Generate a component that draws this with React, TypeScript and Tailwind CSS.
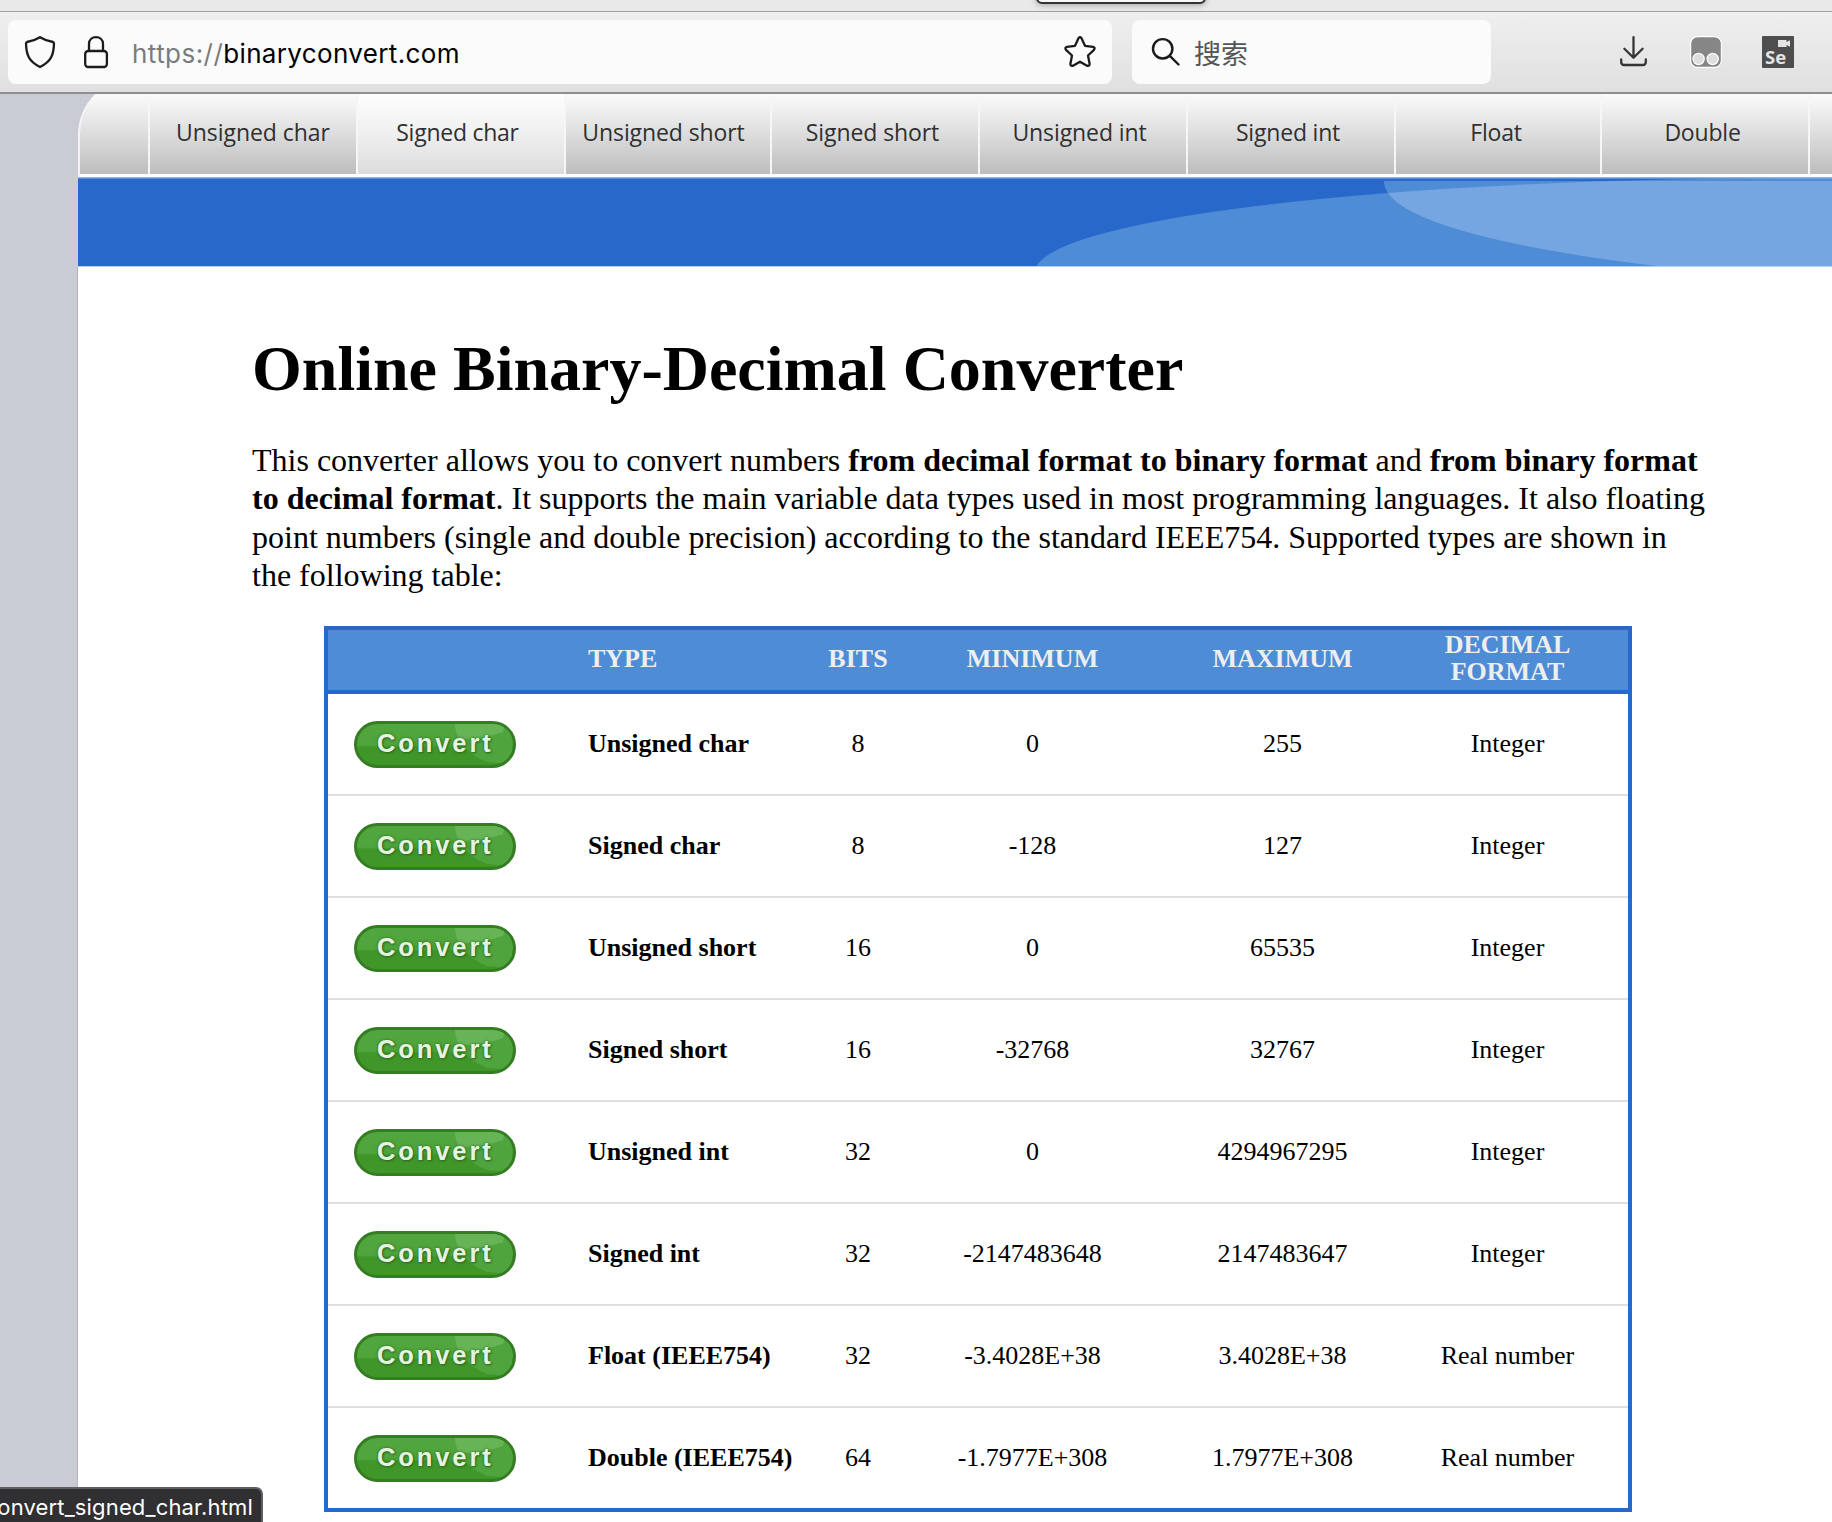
import React from "react";

const tabs = [
  { label: "Unsigned char", cls: "w-[208px]", text: "tracking-[-0.050px]", active: false },
  { label: "Signed char", cls: "w-[208px] pr-[7px]", text: "tracking-[-0.250px]", active: true },
  { label: "Unsigned short", cls: "w-[206px] pr-[9px]", text: "tracking-[-0.100px]", active: false },
  { label: "Signed short", cls: "w-[208px] pr-[5px]", text: "tracking-[-0.100px]", active: false },
  { label: "Unsigned int", cls: "w-[208px] pr-[7px]", text: "tracking-[-0.100px]", active: false },
  { label: "Signed int", cls: "w-[208px] pr-[6px]", text: "tracking-[-0.200px]", active: false },
  { label: "Float", cls: "w-[206px] pr-[4px]", text: "tracking-[-0.200px]", active: false },
  { label: "Double", cls: "w-[208px] pr-[5px]", text: "tracking-[-0.200px]", active: false },
];

const rows = [
  ["Unsigned char", "8", "0", "255", "Integer"],
  ["Signed char", "8", "-128", "127", "Integer"],
  ["Unsigned short", "16", "0", "65535", "Integer"],
  ["Signed short", "16", "-32768", "32767", "Integer"],
  ["Unsigned int", "32", "0", "4294967295", "Integer"],
  ["Signed int", "32", "-2147483648", "2147483647", "Integer"],
  ["Float (IEEE754)", "32", "-3.4028E+38", "3.4028E+38", "Real number"],
  ["Double (IEEE754)", "64", "-1.7977E+308", "1.7977E+308", "Real number"],
];

const gridCols = "grid grid-cols-[260px_210px_120px_229px_271px_179px_31px] items-center";

function Shield() {
  return (
    <svg className="h-9 w-9" viewBox="0 0 36 36" fill="none" stroke="#1b1b1b" strokeWidth="2.3" strokeLinejoin="round">
      <path d="M18 3.2 C22.5 6 27 7.3 31 8 Q32 8.4 32 9.6 C31.6 20.5 29.5 27.500 18 33 C6.500 27.500 4.400 20.500 4 9.600 Q4 8.400 5 8 C9 7.300 13.500 6 18 3.200 Z" />
    </svg>
  );
}

function Lock() {
  return (
    <svg className="h-9 w-7" viewBox="0 0 28 36" fill="none" stroke="#1b1b1b" strokeWidth="2.3">
      <rect x="3.200" y="17" width="21.700" height="16" rx="3" />
      <path d="M7 17 V10 C7 0.800 21 0.800 21 10 V17" />
    </svg>
  );
}

function Star() {
  return (
    <svg className="h-9 w-9" viewBox="0 0 36 36" fill="none" stroke="#1b1b1b" strokeWidth="2.3" strokeLinejoin="round">
      <path d="M16.500 4.200 Q18 2.200 19.500 4.200 L23 11.800 L31 12.800 Q33.600 13.500 32 15.800 L26 21.500 L27.600 29.800 Q27.600 32.600 25 31.700 L18 27.700 L11 31.700 Q8.400 32.600 8.400 29.800 L10 21.500 L4 15.800 Q2.400 13.500 5 12.800 L13 11.800 Z" />
    </svg>
  );
}

function Search() {
  return (
    <svg className="h-8 w-8" viewBox="0 0 32 32" fill="none" stroke="#1b1b1b" strokeWidth="2.4" strokeLinecap="round">
      <circle cx="12.700" cy="12.800" r="9.700" />
      <path d="M19.800 19.800 L28.500 28.500" />
    </svg>
  );
}

function Download() {
  return (
    <svg className="h-8 w-7" viewBox="0 0 28 32" fill="none" stroke="#353535" strokeWidth="2.3" strokeLinecap="round" strokeLinejoin="round">
      <path d="M13.500 1.200 V21.500 M4.400 12.700 L13.500 21.700 L22.600 12.700" />
      <path d="M1.200 23.500 V26 Q1.200 29 4.200 29 H22.800 Q25.800 29 25.800 26 V23.500" />
    </svg>
  );
}

function Monkey() {
  return (
    <svg className="h-8 w-8" viewBox="0 0 32 32">
      <rect x="0.600" y="0.600" width="30.800" height="30.800" rx="7" fill="#868686" stroke="#fff" strokeWidth="1.200" />
      <circle cx="8.600" cy="23" r="5.600" fill="#dedede" stroke="#fff" strokeWidth="1.200" />
      <circle cx="22.700" cy="23" r="5.600" fill="#dedede" stroke="#fff" strokeWidth="1.200" />
    </svg>
  );
}

function SeleniumBadge() {
  return (
    <div className="relative h-8 w-8 rounded-[1px] bg-[#4e4e4e]">
      <svg className="absolute right-1 top-1 h-[7px] w-3" viewBox="0 0 12 7" fill="#e4e4e4">
        <path d="M0 0 H8.500 V2 L12 0.200 V6.800 L8.500 5 V7 H0 Z" />
      </svg>
      <span className="absolute bottom-1 left-[3px] font-['Open_Sans'] text-[18.500px] font-bold leading-[15px] text-[#e4e4e4]">Se</span>
    </div>
  );
}

function ConvertButton() {
  return (
    <div className="relative ml-[26px] mt-px flex h-[47px] w-[162px] overflow-hidden rounded-full border-[3.500px] border-[#357d22] bg-[linear-gradient(#52a63f_0%,#4fa43b_52%,#41962a_56%,#41962a_100%)]">
      <svg className="absolute inset-0 h-10 w-[155px]" viewBox="0 0 155 40">
        <path d="M98 0 C100 18 112 31 130 38 L155 40 V0 Z" fill="#4fa43d" />
        <path d="M98 0 H148 L146 8 C132 13 116 15 102 15 Q98 7 98 0 Z" fill="#67b457" />
      </svg>
      <span className="relative ml-5 mt-1 font-['Liberation_Sans'] text-[25.500px] font-bold leading-[30px] tracking-[2.900px] text-[#e6f3e2] [text-shadow:0_0_3px_#2c6d1b,1px_1px_2px_#2c6d1b]">Convert</span>
    </div>
  );
}

function Toolbar() {
  return (
    <header className="relative h-[94px] border-b-2 border-[#8f8f8f] bg-[linear-gradient(#f1f1f1,#e0e0e0)] font-['Inter']">
      <div className="h-3 border-b border-[#a0a0a0] bg-[#e9e9e9]" />
      <div className="absolute left-[1036px] top-[-20px] h-6 w-[170px] rounded-[6px] border-2 border-[#333] bg-[#f7f7f7] shadow-[0_1px_6px_rgba(0,0,0,0.3)]" />
      <div className="flex items-center pl-2 pt-2">
        <div className="flex h-16 w-[1104px] items-center rounded-[8px] bg-[#fbfbfb] pl-[14px] pr-[14px]">
          <Shield />
          <div className="ml-6"><Lock /></div>
          <div className="ml-[22px] flex-1 whitespace-nowrap pt-[3px] text-[26px] leading-8 text-black">
            <span className="tracking-[0.450px] text-[#7b7b7b]">https://</span><span className="tracking-[0.350px]">binaryconvert.com</span>
          </div>
          <Star />
        </div>
        <div className="ml-5 flex h-16 w-[359px] items-center rounded-[8px] bg-[#fbfbfb] pl-[18px]">
          <Search />
          <span className="ml-3 pt-px font-['Noto_Sans_CJK_SC',sans-serif] text-[27px] leading-8 text-[#555]">搜索</span>
        </div>
        <div className="ml-[129px] flex items-center">
          <Download />
          <div className="ml-[42px]"><Monkey /></div>
          <div className="ml-10"><SeleniumBadge /></div>
        </div>
      </div>
    </header>
  );
}

function TabBar() {
  return (
    <nav className="h-[83px] overflow-hidden bg-[#c9cbd5]">
      <div className="-mt-[17px] h-[100px] w-[1756px] overflow-hidden rounded-tl-[58px] border-l-2 border-[#f4f4f4] bg-[#fdfdfd] pt-[17px]">
        <div className="flex h-20">
          <div className="w-[70px] shrink-0 border-r-2 border-[#f6f6f6] bg-[linear-gradient(#fbfbfb,#e0e0e0_45%,#bdbdbd)]" />
          {tabs.map((t) => (
            <div
              key={t.label}
              className={
                "flex shrink-0 justify-center border-r-2 border-[#f6f6f6] pt-[18px] font-['Open_Sans'] text-[23px] font-medium leading-[40px] whitespace-nowrap text-[#303030] " +
                t.cls + " " +
                (t.active
                  ? "bg-[linear-gradient(#fdfdfd,#f1f1f1_45%,#dcdcdc)]"
                  : "bg-[linear-gradient(#fbfbfb,#e0e0e0_45%,#bdbdbd)]")
              }
            >
              <span className={t.text}>{t.label}</span>
            </div>
          ))}
          <div className="w-10 shrink-0 bg-[linear-gradient(#fbfbfb,#e0e0e0_45%,#bdbdbd)]" />
        </div>
      </div>
    </nav>
  );
}

function Banner() {
  return (
    <svg className="block h-[90px] w-full" viewBox="78 177 1754 90">
      <defs>
        <clipPath id="swoosh"><ellipse cx="1807" cy="272" rx="772" ry="94" /></clipPath>
        <clipPath id="below"><rect x="1300" y="181" width="540" height="90" /></clipPath>
      </defs>
      <rect x="78" y="177" width="1754" height="90" fill="#2868ca" />
      <ellipse cx="1807" cy="272" rx="772" ry="94" fill="#4e8cd6" />
      <g clipPath="url(#below)">
        <ellipse cx="2069" cy="182" rx="685" ry="105" fill="#4e8cd6" />
        <g clipPath="url(#swoosh)">
          <ellipse cx="2069" cy="182" rx="685" ry="105" fill="#76a6e1" />
        </g>
      </g>
      <rect x="78" y="177" width="1754" height="1.500" fill="#8fb3e2" />
      <rect x="78" y="266" width="1754" height="1" fill="#b5cff0" />
    </svg>
  );
}

export default function App() {
  return (
    <div className="relative h-[1522px] w-[1832px] overflow-hidden bg-[#c9cbd5]">
      <Toolbar />
      <div className="pl-[78px]">
        <TabBar />
        <Banner />
        <main className="h-[1255px] bg-white pl-[174px] font-['Liberation_Serif'] text-black shadow-[-1px_0_0_#b3b5c0]">
          <h1 className="pt-[65px] text-[64px] font-bold leading-[74px] whitespace-nowrap">Online Binary-Decimal Converter</h1>
          <div className="mt-[35px] h-[154px] text-[32px] leading-[38.400px] whitespace-nowrap">
            <p>This converter allows you to convert numbers <b>from decimal format to binary format</b> and <b>from binary format</b></p>
            <p><b>to decimal format</b>. It supports the main variable data types used in most programming languages. It also floating</p>
            <p>point numbers (single and double precision) according to the standard IEEE754. Supported types are shown in</p>
            <p>the following table:</p>
          </div>
          <div className="ml-[72px] mt-[31px] w-[1308px] border-4 border-[#2868ca] text-[26px] leading-[27px]">
            <div className={gridCols + " h-16 border-b-4 border-[#2868ca] bg-[#4e8cd6] pb-1 text-center font-bold text-[#eee]"}>
              <span />
              <span className="text-left">TYPE</span>
              <span>BITS</span>
              <span>MINIMUM</span>
              <span>MAXIMUM</span>
              <span>DECIMAL<br />FORMAT</span>
            </div>
            {rows.map((r, i) => (
              <div key={r[0]} className={gridCols + " text-center " + (i < rows.length - 1 ? "h-[102px] border-b-2 border-[#dfdfdf]" : "h-[100px]")}>
                <ConvertButton />
                <b className="pb-px text-left whitespace-nowrap">{r[0]}</b>
                <span className="pb-px">{r[1]}</span>
                <span className="pb-px">{r[2]}</span>
                <span className="pb-px">{r[3]}</span>
                <span className="pb-px">{r[4]}</span>
              </div>
            ))}
          </div>
        </main>
      </div>
      <div className="absolute bottom-0 left-0 flex h-[35px] w-[263px] justify-end overflow-hidden rounded-tr-[7px] border-r-2 border-t-2 border-[#5f5f61] bg-[#303032] pr-2 font-['Inter'] text-[22px] leading-[37px] tracking-[0.150px] whitespace-nowrap text-white">
        onvert_signed_char.html
      </div>
    </div>
  );
}
